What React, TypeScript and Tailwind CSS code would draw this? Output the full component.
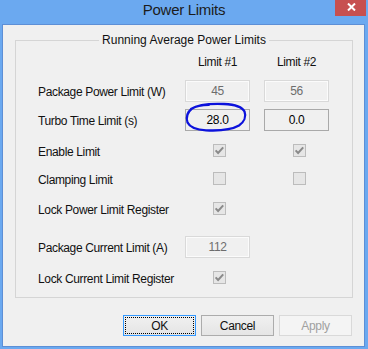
import React from 'react';

const ROW = "grid grid-cols-[133px_65px_65px] gap-x-[14px] items-center";

const Check = ({ checked }: { checked: boolean }) => (
  <span className="flex w-[13px] h-[13px] border border-[#bcbcbc] bg-[#e6e6e6]">
    {checked && (
      <svg width="11" height="11" viewBox="0 0 11 11">
        <path d="M1.6 5.4 L4.1 8 L9.2 2.4" stroke="#8a8a8a" strokeWidth="2" fill="none" />
      </svg>
    )}
  </span>
);

const Field = ({ value, enabled }: { value: string; enabled?: boolean }) => (
  <div
    className={`h-[22px] w-[65px] flex items-center justify-center bg-[#f0f0f0] border ${
      enabled
        ? 'border-[#a9a9a9] text-black'
        : 'border-[#d9d9d9] text-[#6d6d6d] shadow-[inset_0_0_0_1px_#fbfbfb]'
    }`}
  >
    {value}
  </div>
);

const Label = ({ children }: { children: React.ReactNode }) => (
  <span className="pt-[2px] text-[#111] whitespace-nowrap">{children}</span>
);

export default function App() {
  return (
    <div className="w-[368px] h-[349px] bg-[#6ba9f0] flex flex-col relative overflow-hidden font-['Liberation_Sans',Arial,sans-serif] text-[12px] tracking-[-0.35px] leading-[14px]">
      {/* Barra de título */}
      <div className="h-[24px] flex justify-center">
        <span className="pt-[1px] text-[15px] leading-[17px] tracking-[-0.3px] text-[#1c1c1c]">Power Limits</span>
        <div className="absolute left-[335px] top-0 w-[31px] h-[16px] bg-[#c75050] flex pl-[12px] pt-[3px]">
          <svg width="9" height="8" viewBox="0 0 9 8">
            <path d="M1 0.5 L8 7.5 M8 0.5 L1 7.5" stroke="#fff" strokeWidth="2" />
          </svg>
        </div>
      </div>

      {/* Corpo do diálogo */}
      <div className="ml-[2px] mr-[3px] mb-[2px] flex-1 border border-[#5d8fd6] bg-[#f0f0f0] flex flex-col pl-[12px] pr-[11px] pt-[8px]">
        <fieldset className="border border-[#d5d5d5]">
          <legend className="mx-auto px-[3px] text-[12px] leading-[15px] tracking-normal text-[#111]">
            Running Average Power Limits
          </legend>

          <div className="pl-[22px] pb-[8px] flex flex-col">
            <div className={`${ROW} h-[22px] mt-[3px]`}>
              <span />
              <span className="text-center text-[#111]">Limit #1</span>
              <span className="text-center text-[#111]">Limit #2</span>
            </div>

            <div className={`${ROW} h-[22px] mt-[7px]`}>
              <Label>Package Power Limit (W)</Label>
              <Field value="45" />
              <Field value="56" />
            </div>

            <div className={`${ROW} h-[22px] mt-[7px]`}>
              <Label>Turbo Time Limit (s)</Label>
              <div className="relative">
                <Field value="28.0" enabled />
                {/* marcação à mão */}
                <svg className="absolute left-[-3px] top-[-8px]" width="68" height="33" viewBox="0 0 68 33" fill="none">
                  <path
                    d="M9 8 C16 3.5 30 2.5 42 3 C52 3.5 60 5.5 62.5 10.5 C64.5 15.5 62 21 57 24.5 C50 28.5 38 30 24 29.3 C15 28.8 8 26.5 5.5 21.5 C4 17 5 11.5 10 7.5 C14 5 20 4 27 3.8"
                    stroke="#0c12dc"
                    strokeWidth="2.3"
                    strokeLinecap="round"
                  />
                </svg>
              </div>
              <Field value="0.0" enabled />
            </div>

            <div className={`${ROW} h-[23px] mt-[8px]`}>
              <Label>Enable Limit</Label>
              <span className="pl-[28px]"><Check checked /></span>
              <span className="pl-[29px]"><Check checked /></span>
            </div>

            <div className={`${ROW} h-[23px] mt-[5px]`}>
              <Label>Clamping Limit</Label>
              <span className="pl-[28px]"><Check checked={false} /></span>
              <span className="pl-[29px]"><Check checked={false} /></span>
            </div>

            <div className={`${ROW} h-[23px] mt-[7px]`}>
              <Label>Lock Power Limit Register</Label>
              <span className="pl-[28px]"><Check checked /></span>
              <span />
            </div>

            <div className={`${ROW} h-[22px] mt-[16px]`}>
              <Label>Package Current Limit (A)</Label>
              <Field value="112" />
              <span />
            </div>

            <div className={`${ROW} h-[23px] mt-[8px]`}>
              <Label>Lock Current Limit Register</Label>
              <span className="pl-[28px]"><Check checked /></span>
              <span />
            </div>
          </div>
        </fieldset>

        {/* Botões */}
        <div className="flex justify-end gap-[5px] mt-[17px] mr-[1px]">
          <button className="w-[73px] h-[21px] border border-[#3399ff] bg-gradient-to-b from-[#f0f0f0] to-[#e5e5e5] p-[1px] flex">
            <span className="flex-1 border border-dotted border-black flex items-center justify-center text-[#111]">OK</span>
          </button>
          <button className="w-[73px] h-[21px] border border-[#acacac] bg-gradient-to-b from-[#f0f0f0] to-[#e5e5e5] flex items-center justify-center text-[#111]">
            Cancel
          </button>
          <button disabled className="w-[73px] h-[21px] border border-[#d9d9d9] bg-[#f4f4f4] flex items-center justify-center text-[#a0a0a0]">
            Apply
          </button>
        </div>
      </div>
    </div>
  );
}
